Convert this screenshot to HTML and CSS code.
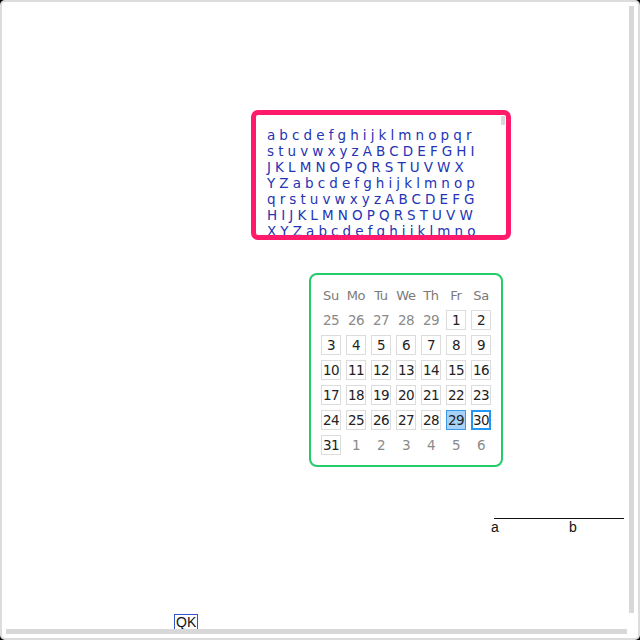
FILE: index.html
```html
<!DOCTYPE html>
<html>
<head>
<meta charset="utf-8">
<link rel="stylesheet" href="styles.css">
</head>
<body>
<div class="frame">
  <div class="textbox">
    <div class="textscroll">
      <div class="tline">abcdefghijklmnopqr</div>
      <div class="tline">stuvwxyzABCDEFGHI</div>
      <div class="tline">JKLMNOPQRSTUVWX</div>
      <div class="tline">YZabcdefghijklmnop</div>
      <div class="tline">qrstuvwxyzABCDEFG</div>
      <div class="tline">HIJKLMNOPQRSTUVW</div>
      <div class="tline">XYZabcdefghijklmno</div>
      <div class="tline">pqrstuvwxyzABCDEF</div>
    </div>
    <div class="thumb-v-small"></div>
  </div>

  <div class="calendar">
    <div class="dow">Su</div><div class="dow">Mo</div><div class="dow">Tu</div><div class="dow">We</div><div class="dow">Th</div><div class="dow">Fr</div><div class="dow">Sa</div>
    <div class="day out">25</div><div class="day out">26</div><div class="day out">27</div><div class="day out">28</div><div class="day out">29</div><div class="day">1</div><div class="day">2</div>
    <div class="day">3</div><div class="day">4</div><div class="day">5</div><div class="day">6</div><div class="day">7</div><div class="day">8</div><div class="day">9</div>
    <div class="day">10</div><div class="day">11</div><div class="day">12</div><div class="day">13</div><div class="day">14</div><div class="day">15</div><div class="day">16</div>
    <div class="day">17</div><div class="day">18</div><div class="day">19</div><div class="day">20</div><div class="day">21</div><div class="day">22</div><div class="day">23</div>
    <div class="day">24</div><div class="day">25</div><div class="day">26</div><div class="day">27</div><div class="day">28</div><div class="day selected">29</div><div class="day focused">30</div>
    <div class="day">31</div><div class="day out">1</div><div class="day out">2</div><div class="day out">3</div><div class="day out">4</div><div class="day out">5</div><div class="day out">6</div>
  </div>

  <div class="axis">
    <span class="lbl lbl-a">a</span>
    <span class="lbl lbl-b">b</span>
  </div>

  <div class="qk">QK</div>

  <div class="sb-v"></div>
  <div class="sb-h"></div>
</div>
</body>
</html>
```
FILE: styles.css
```css
html { background: #000; }
body { margin: 0; }

.frame {
  width: 640px;
  height: 640px;
  box-sizing: border-box;
  border: 2px solid #dcdcdc;
  border-radius: 5px;
  background: #fff;
  position: relative;
  overflow: hidden;
  display: flex;
  flex-direction: column;
  align-items: flex-start;
  font-family: "Liberation Sans", Arial, sans-serif;
}

.textbox {
  margin: 108px 0 0 249px;
  width: 260px;
  height: 130px;
  box-sizing: border-box;
  border: 5px solid #ff1a6c;
  border-radius: 7px;
  position: relative;
  overflow: hidden;
}

.textscroll {
  height: 120px;
  box-sizing: border-box;
  padding: 12px 6px 0 11px;
  font-family: "DejaVu Sans", sans-serif;
  font-size: 13.5px;
  line-height: 16px;
  letter-spacing: 4.1px;
  color: #2434b4;
  overflow: hidden;
}

.tline {
  white-space: nowrap;
}

.thumb-v-small {
  position: absolute;
  right: 1px;
  top: 1px;
  width: 4px;
  height: 9px;
  background: #d9d9d9;
  border-radius: 1px;
}

.calendar {
  margin: 33px 0 0 307px;
  width: 194px;
  height: 194px;
  box-sizing: border-box;
  border: 2px solid #22cc6a;
  border-radius: 8px;
  padding: 10px;
  display: grid;
  grid-template-columns: repeat(7, 20px);
  grid-auto-rows: 20px;
  gap: 5px;
  font-family: "DejaVu Sans", sans-serif;
  font-size: 13.5px;
}

.dow {
  color: #7a7a7a;
  display: flex;
  align-items: center;
  justify-content: center;
  white-space: nowrap;
  font-size: 13px;
  letter-spacing: -0.3px;
}

.day {
  box-sizing: border-box;
  border: 1px solid #dcdcdc;
  color: #222;
  display: flex;
  align-items: center;
  justify-content: center;
  white-space: nowrap;
  letter-spacing: -0.5px;
}

.day.out {
  border-color: transparent;
  color: #8a8a8a;
}

.day.selected {
  background: #a6d2f7;
  border-color: #3a9ae8;
}

.day.focused {
  border: 2px solid #2196f3;
}

.axis {
  margin: 51px 0 0 492px;
  width: 130px;
  height: 17px;
  border-top: 1px solid #111;
  position: relative;
  font-size: 14px;
  color: #111;
}

.lbl {
  position: absolute;
  top: 0;
  line-height: 16px;
}
.lbl-a { left: -3px; }
.lbl-b { left: 75px; }

.qk {
  margin: 78px 0 0 172px;
  border: 1px solid #3355cc;
  font-size: 14px;
  line-height: 15px;
  padding: 0 1px;
  color: #111;
}

.sb-v {
  position: absolute;
  right: 4px;
  top: 4px;
  width: 5px;
  height: 607px;
  background: #d8d8d8;
}

.sb-h {
  position: absolute;
  left: 4px;
  bottom: 4px;
  width: 621px;
  height: 5px;
  background: #d8d8d8;
}
```
